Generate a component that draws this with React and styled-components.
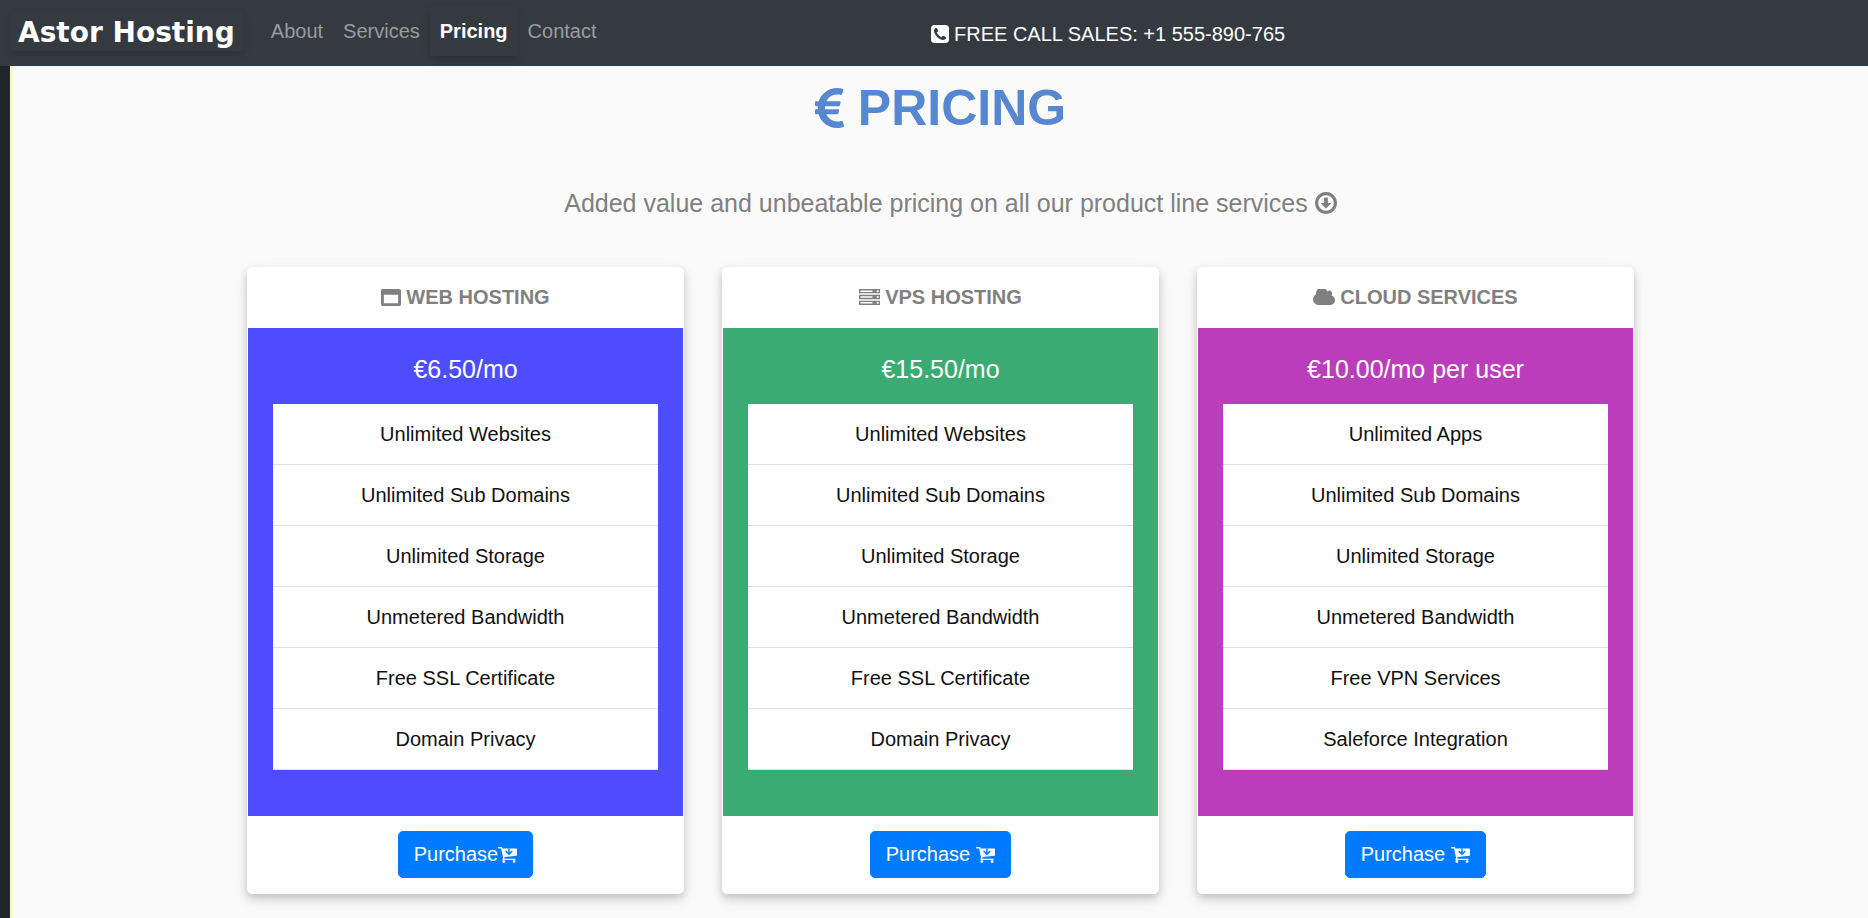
import React from "react";
import styled, { createGlobalStyle, css } from "styled-components";

const GlobalStyle = createGlobalStyle`
  *, *::before, *::after { box-sizing: border-box; }
  html { background: #212529; }
  body {
    margin: 0;
    font-family: "Liberation Sans", Arial, sans-serif;
    font-size: 20px;
    line-height: 30px;
    color: #111;
  }
`;

const Header = styled.header`
  display: grid;
  grid-template-columns: minmax(0, 1fr) minmax(0, 1fr);
  align-items: center;
  min-height: 66px;
  padding: 4px 16px 6px 10px;
  background: #343a40;
`;

const Nav = styled.nav`
  display: flex;
  align-items: center;
  gap: 18px;
  padding-bottom: 2px;
`;

const Brand = styled.a`
  padding: 4px 8px 0;
  color: #fff;
  font-family: "DejaVu Sans", sans-serif;
  font-size: 28px;
  font-weight: 700;
  line-height: 36px;
  white-space: nowrap;
  text-decoration: none;
  box-shadow: 0 4px 8px rgba(0, 0, 0, 0.12);
`;

const NavList = styled.ul`
  display: flex;
  margin: 0;
  padding: 0;
  list-style: none;
`;

const NavLink = styled.a`
  display: block;
  padding: 10px;
  color: #999c9f;
  text-decoration: none;
  ${(p) =>
    p.$active &&
    css`
      color: #fff;
      font-weight: 700;
      box-shadow: 0 4px 8px rgba(0, 0, 0, 0.16);
    `}
`;

const Sales = styled.p`
  display: flex;
  align-items: center;
  gap: 5px;
  margin: 0;
  padding-top: 4px;
  color: #fff;
  white-space: nowrap;
`;

const Page = styled.main`
  min-height: calc(100vh - 66px);
  margin-left: 10px;
  padding: 12px 0 24px;
  border-left: 3px solid #f3f8d0;
  background: #fafafa;
`;

const Title = styled.h1`
  display: flex;
  justify-content: center;
  align-items: center;
  gap: 14px;
  margin: 0;
  color: #5588d0;
  font-size: 50px;
  line-height: 60px;
`;

const Subtitle = styled.p`
  display: flex;
  justify-content: center;
  align-items: center;
  gap: 7px;
  margin: 46px 0 45px;
  padding-left: 20px;
  color: #808080;
  font-size: 25px;
  line-height: 38px;
`;

const Plans = styled.section`
  display: grid;
  grid-template-columns: repeat(3, 1fr);
  gap: 38px;
  max-width: 1387px;
  margin: 0 auto;
`;

const Card = styled.article`
  border: 1px solid #fff;
  border-radius: 5px;
  background: #fff;
  text-align: center;
  box-shadow: 0 4px 8px rgba(0, 0, 0, 0.2), 0 6px 20px rgba(0, 0, 0, 0.06);
`;

const CardHeader = styled.h2`
  display: flex;
  justify-content: center;
  align-items: center;
  gap: 5px;
  margin: 0;
  padding: 14px 15px 16px;
  color: #808080;
  font-size: 20px;
  line-height: 30px;
`;

const CardBody = styled.div`
  padding: 26px 25px 46px;
  background: ${(p) => p.$color};
`;

const Price = styled.p`
  margin: 0 0 20px;
  color: #fff;
  font-size: 25px;
  line-height: 30px;
`;

const Features = styled.ul`
  margin: 0;
  padding: 0;
  list-style: none;
  background: #fff;
`;

const Feature = styled.li`
  padding: 15px;
  border-bottom: 1px solid #dfdfdf;
`;

const CardFooter = styled.footer`
  padding: 15px;
`;

const Purchase = styled.button`
  display: inline-flex;
  align-items: center;
  gap: ${(p) => (p.$tight ? 0 : 6)}px;
  padding: 8px 15px;
  border: 1px solid #007bff;
  border-radius: 5px;
  background: #007bff;
  color: #fff;
  font: inherit;
  line-height: 29px;
  vertical-align: top;
  cursor: pointer;
`;

const Glyph = styled.svg`
  flex: none;
  fill: currentColor;
`;

const ICONS = {
  phone: {
    w: 18, h: 18, box: "0 128 1536 1536",
    d: "M1280 1193q0-11-2-16-3-8-38.5-29.5t-88.5-49.5l-53-29q-5-3-19-13t-25-15-21-5q-18 0-47 32.5t-57 65.5-44 33q-7 0-16.5-3.5t-15.5-6.5-17-9.5-14-8.5q-99-55-170.5-126.5t-126.5-170.5q-2-3-8.5-14t-9.5-17-6.5-15.5-3.5-16.5q0-13 20.5-33.5t45-38.5 45-39.5 20.5-36.5q0-10-5-21t-15-25-13-19q-3-6-15-28.5t-25-45.5-26.5-47.5-25-40.5-16.5-18-16-2q-48 0-101 22-46 21-80 94.5t-34 130.5q0 16 2.5 34t5 30.5 9 33 10 29.5 12.5 33 11 30q60 164 216.5 320.5t320.5 216.5q6 2 30 11t33 12.5 29.5 10 33 9 30.5 5 34 2.5q57 0 130.5-34t94.5-80q22-53 22-101zm256-777v960q0 119-84.5 203.5t-203.5 84.5h-960q-119 0-203.5-84.5t-84.5-203.5v-960q0-119 84.5-203.5t203.5-84.5h960q119 0 203.5 84.5t84.5 203.5z",
  },
  euro: {
    w: 29, h: 40, box: "0 128 1014 1408",
    d: "M976 1307l35 159q3 12-3 22.5t-17 14.5l-5 1q-4 2-10.5 3.5t-16 4.5-21.5 5.5-25.5 5-30 5-33.5 4.5-36.5 3-38.5 1q-234 0-409-130.5t-238-351.5h-95q-13 0-22.5-9.5t-9.5-22.5v-113q0-13 9.5-22.5t22.5-9.5h66q-2-57 1-105h-67q-14 0-23-9t-9-23v-114q0-14 9-23t23-9h98q67-210 243.5-338t400.5-128q102 0 194 23 11 3 20 15 6 11 3 24l-43 159q-3 13-14 19.5t-24 2.5l-4-1q-4-1-11.5-2.5l-17.5-3.5-22.5-3.5-26-3-29-2.5-29.5-1q-126 0-226 64t-150 176h468q16 0 25 12 10 12 7 26l-24 114q-5 26-32 26h-488q-3 37 0 105h459q15 0 25 12 9 12 6 27l-24 112q-2 11-11 18.5t-20 7.5h-387q48 117 149.5 185.5t228.5 68.5q18 0 36-1.5t33.5-3.5 29.5-4.5 24.5-5 18.5-4.5l12-3 5-2q13-5 26 2 12 7 15 21z",
  },
  down: {
    w: 22, h: 22, box: "0 128 1536 1536",
    d: "M1120 928q0 12-10 24l-319 319q-11 9-23 9t-23-9l-320-320q-15-16-7-35 8-20 30-20h192v-352q0-14 9-23t23-9h192q14 0 23 9t9 23v352h192q14 0 23 9t9 23zm-352-576q-148 0-273 73t-198 198-73 273 73 273 198 198 273 73 273-73 198-198 73-273-73-273-198-198-273-73zm768 544q0 209-103 385.5t-279.5 279.5-385.5 103-385.5-103-279.5-279.5-103-385.5 103-385.5 279.5-279.5 385.5-103 385.5 103 279.5 279.5 103 385.5z",
  },
  window: {
    w: 20, h: 17, box: "0 128 1792 1536",
    d: "M256 1408h1280v-768h-1280v768zm1536-1120v1216q0 66-47 113t-113 47h-1472q-66 0-113-47t-47-113v-1216q0-66 47-113t113-47h1472q66 0 113 47t47 113z",
  },
  server: {
    w: 21, h: 16, box: "0 128 1792 1408",
    d: "M128 1408h1024v-128h-1024v128zm0-512h1024v-128h-1024v128zm1568 448q0-40-28-68t-68-28-68 28-28 68 28 68 68 28 68-28 28-68zm-1568-960h1024v-128h-1024v128zm1568 448q0-40-28-68t-68-28-68 28-28 68 28 68 68 28 68-28 28-68zm0-512q0-40-28-68t-68-28-68 28-28 68 28 68 68 28 68-28 28-68zm96 832v384h-1792v-384h1792zm0-512v384h-1792v-384h1792zm0-512v384h-1792v-384h1792z",
  },
  cloud: {
    w: 22, h: 16, box: "64 256 1920 1280",
    d: "M1984 1152q0 159-112.5 271.5t-271.5 112.5h-1088q-185 0-316.5-131.5t-131.5-316.5q0-132 71-241.5t187-163.5q-2-28-2-43 0-212 150-362t362-150q158 0 286.5 88t187.5 230q70-62 166-62 106 0 181 75t75 181q0 75-41 138 129 30 213 134.5t84 239.5z",
  },
  cart: {
    w: 19, h: 16, box: "0 256 1664 1408",
    d: "M1280 640q0-26-19-45t-45-19-45 19l-147 146v-293q0-26-19-45t-45-19-45 19-19 45v293l-147-146q-19-19-45-19t-45 19-19 45 19 45l256 256q19 19 45 19t45-19l256-256q19-19 19-45zm-640 896q0 53-37.5 90.5t-90.5 37.5-90.5-37.5-37.5-90.5 37.5-90.5 90.5-37.5 90.5 37.5 37.5 90.5zm896 0q0 53-37.5 90.5t-90.5 37.5-90.5-37.5-37.5-90.5 37.5-90.5 90.5-37.5 90.5 37.5 37.5 90.5zm128-1088v512q0 24-16 42.5t-41 21.5l-1044 122q1 7 4.5 21.5t6 26.5 2.5 22q0 16-24 64h920q26 0 45 19t19 45-19 45-45 19h-1024q-26 0-45-19t-19-45q0-14 11-39.5t29.5-59.5 20.5-38l-177-823h-204q-26 0-45-19t-19-45 19-45 45-19h256q16 0 28.5 6.5t20 15.5 13 24.5 7.5 26.5 5.5 29.5 4.5 25.5h1201q26 0 45 19t19 45z",
  },
};

function Icon({ name }) {
  const { w, h, box, d } = ICONS[name];
  return (
    <Glyph width={w} height={h} viewBox={box} preserveAspectRatio="none" aria-hidden="true">
      <path fillRule="evenodd" d={d} />
    </Glyph>
  );
}

const LINKS = ["About", "Services", "Pricing", "Contact"];

const PLANS = [
  {
    name: "WEB HOSTING", icon: "window", color: "#4d4dff", price: "€6.50/mo", tight: true,
    features: ["Unlimited Websites", "Unlimited Sub Domains", "Unlimited Storage", "Unmetered Bandwidth", "Free SSL Certificate", "Domain Privacy"],
  },
  {
    name: "VPS HOSTING", icon: "server", color: "#3aac73", price: "€15.50/mo",
    features: ["Unlimited Websites", "Unlimited Sub Domains", "Unlimited Storage", "Unmetered Bandwidth", "Free SSL Certificate", "Domain Privacy"],
  },
  {
    name: "CLOUD SERVICES", icon: "cloud", color: "#bc3dbc", price: "€10.00/mo per user",
    features: ["Unlimited Apps", "Unlimited Sub Domains", "Unlimited Storage", "Unmetered Bandwidth", "Free VPN Services", "Saleforce Integration"],
  },
];

export default function App() {
  return (
    <>
      <GlobalStyle />
      <Header>
        <Nav>
          <Brand href="#home">Astor Hosting</Brand>
          <NavList>
            {LINKS.map((label) => (
              <li key={label}>
                <NavLink href={`#${label.toLowerCase()}`} $active={label === "Pricing"}>
                  {label}
                </NavLink>
              </li>
            ))}
          </NavList>
        </Nav>
        <Sales>
          <Icon name="phone" />
          FREE CALL SALES: +1 555-890-765
        </Sales>
      </Header>
      <Page>
        <Title>
          <Icon name="euro" />
          PRICING
        </Title>
        <Subtitle>
          Added value and unbeatable pricing on all our product line services
          <Icon name="down" />
        </Subtitle>
        <Plans>
          {PLANS.map((plan) => (
            <Card key={plan.name}>
              <CardHeader>
                <Icon name={plan.icon} />
                {plan.name}
              </CardHeader>
              <CardBody $color={plan.color}>
                <Price>{plan.price}</Price>
                <Features>
                  {plan.features.map((feature) => (
                    <Feature key={feature}>{feature}</Feature>
                  ))}
                </Features>
              </CardBody>
              <CardFooter>
                <Purchase type="button" $tight={plan.tight}>
                  Purchase
                  <Icon name="cart" />
                </Purchase>
              </CardFooter>
            </Card>
          ))}
        </Plans>
      </Page>
    </>
  );
}
